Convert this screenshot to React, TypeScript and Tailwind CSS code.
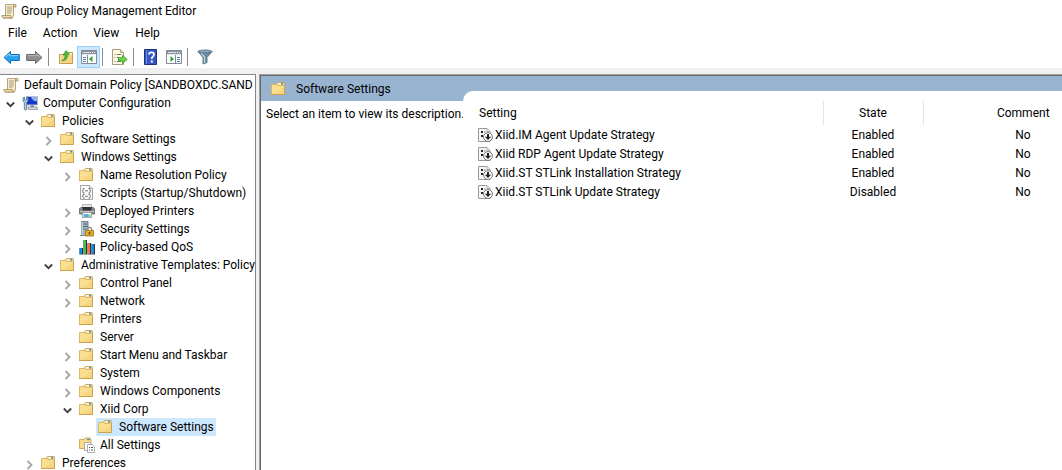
import { useState, type ReactNode } from 'react';

type IconProps = { className?: string };

function ScrollIcon() {
  return (
    <svg width="16" height="16" viewBox="0 0 16 16" aria-hidden="true">
      <path d="M4.5 1.5h8v10.500l-1 3h-9c2 0 2-1 2-2.500z" fill="#f8edc8" stroke="#b5a47c" />
      <path d="M12.500 4V2.500a1.200 1.200 0 0 1 2.500 0V4z" fill="#dcc48c" stroke="#a08c60" strokeWidth=".8" />
      <path d="M.8 12.500h8.700c0 1.300.5 2.500 1.700 2.500H2.500C1.400 15 .8 14 .8 12.500z" fill="#e9d7a5" stroke="#a08c60" strokeWidth=".8" />
      <path d="M6 4h5M6 6h5M6 8h5M6 10h4" stroke="#9c9484" strokeWidth=".9" />
    </svg>
  );
}

function FolderIcon({ className }: IconProps) {
  return (
    <svg width="16" height="16" viewBox="0 0 16 16" className={className} aria-hidden="true">
      <path d="M5.500 4V2.500l1-1H13l.5 1V5h-8z" fill="#f3d78e" stroke="#c9a04c" strokeWidth=".9" />
      <path d="M7.500 2.800H10" stroke="#fff" strokeWidth="1.400" />
      <path d="M10 2.800h2" stroke="#3a96dc" strokeWidth="1.400" />
      <path d="M.5 3.500h5l1.500 1h6.500v9H.5z" fill="#fadf91" stroke="#dcb866" />
      <path d="M3 13 13 6v7z" fill="#f4d07a" opacity=".7" />
      <path d="M0 13.500h13.500V5" fill="none" stroke="#c8a04c" strokeWidth=".9" />
    </svg>
  );
}

function ComputerIcon() {
  return (
    <svg width="16" height="16" viewBox="0 0 16 16" aria-hidden="true">
      <path d="M4.500 1.500h11v8.500h-11z" fill="#1638c8" stroke="#b8c0cc" />
      <path d="M9 2h6v4c-2 1-4 0-6-4z" fill="#8fb4f4" />
      <path d="M8.500 10.500h3.500v2H8.500z" fill="#6c7688" />
      <path d="M6 12h9l.8 2.500H6.500z" fill="#d6d8de" stroke="#7c8490" strokeWidth=".7" />
      <path d="M1 3v3l1.300 1.200V14c0 1.300 2.400 1.300 2.400 0V7.200L6 6V3L4.600 2v3H2.400V2z" fill="#b4cfe4" stroke="#426c90" strokeWidth=".8" />
    </svg>
  );
}

function ScriptIcon() {
  return (
    <svg width="16" height="16" viewBox="0 0 16 16" aria-hidden="true">
      <path d="M1.500.5h9l3 3v11h-12z" fill="#fafafa" stroke="#a4a4a4" />
      <path d="M10.500.5v3h3" fill="#e2e2e2" stroke="#a4a4a4" strokeWidth=".8" />
      <path d="M5.500 3.500H4.200v1.500L3.200 6l1 .8v1.200h1.300M9.500 3.500h1.300v1.500l1 1-1 .8v1.200H9.500M5.500 9.500H4.200v1l-1 .8 1 .8v1h1.300M9.500 9.500h1.300v1l1 .8-1 .8v1H9.500" fill="none" stroke="#666" strokeWidth=".9" />
      <path d="M6 5.800h3M6 11.300h3" stroke="#777" />
    </svg>
  );
}

function PrinterIcon() {
  return (
    <svg width="16" height="16" viewBox="0 0 16 16" aria-hidden="true">
      <path d="M3.500 1.500h9V6h-9z" fill="#e6e6e6" stroke="#a8a8a8" strokeWidth=".8" />
      <path d="M.5 5.500 2 4.500h12l1.500 1V11H.5z" fill="#85888c" stroke="#64686c" strokeWidth=".8" />
      <path d="M3.500 4h9v3.500h-9z" fill="#333437" />
      <path d="M1 8.500h14" stroke="#c2c4c6" />
      <path d="M4 9.500h8l1 5H3z" fill="#fff" stroke="#999" strokeWidth=".8" />
      <path d="M4.500 11h5v3h-5z" fill="#56b2e0" />
      <path d="M9 11.500h2.500l.5 2.500H9z" fill="#89c9a0" />
    </svg>
  );
}

function SecurityIcon() {
  return (
    <svg width="16" height="16" viewBox="0 0 16 16" aria-hidden="true">
      <path d="M2.500.5h6.500v14H2.500z" fill="#a9bac6" stroke="#6c808c" />
      <path d="M3 1v13" stroke="#d5e0e6" />
      <path d="M4 3h4.500M4 5.500h4.500M4 8h3" stroke="#3f5666" strokeWidth=".9" />
      <path d="M1 14.500h6" stroke="#7c8c96" />
      <path d="M8.300 10V8.500a2.200 2.200 0 0 1 4.400 0V10" fill="none" stroke="#92898a" strokeWidth="1.300" />
      <path d="M6.500 9.500h8v5.500h-8z" fill="#e0ad30" stroke="#9d7110" strokeWidth=".8" />
      <path d="M10.500 11v2.500" stroke="#694907" strokeWidth="1.500" />
    </svg>
  );
}

function ChartIcon() {
  return (
    <svg width="17" height="16" viewBox="0 0 17 16" aria-hidden="true">
      <path d="M.5 9h3.500v6.500H.5zM4.500 1H8v14.500H4.500zM8.500 4H12v11.500H8.500zM12.500 5H16v10.500h-3.500z" fill="#27343c" />
      <path d="M.5 9H3v6H.5z" fill="#1488dc" />
      <path d="M4.500 1H7v14H4.500z" fill="#4bb950" />
      <path d="M8.500 4H11v11H8.500z" fill="#ee7350" />
      <path d="M12.500 5H15v10h-2.500z" fill="#1c86d0" />
    </svg>
  );
}

function AllSettingsIcon() {
  return (
    <svg width="17" height="16" viewBox="0 0 17 16" aria-hidden="true">
      <path d="M.5 2.500h4.500l1-1.500h5l1 1.500v9H.5z" fill="#f9dc88" stroke="#d0a653" strokeWidth=".9" />
      <path d="M8 2.500h3" stroke="#3a96dc" strokeWidth="1.200" />
      <path d="M5.500 5.500h5l2 2v6h-7z" fill="#fff" stroke="#999" strokeWidth=".8" />
      <path d="M8.500 7.500h5l2 2v6h-7z" fill="#fff" stroke="#999" strokeWidth=".8" />
      <path d="M10 10.500h1M12 10.500h2M10 13h1M12 13h2" stroke="#555" />
    </svg>
  );
}

function PolicyIcon() {
  return (
    <svg width="15" height="16" viewBox="0 0 15 16" className="shrink-0" aria-hidden="true">
      <path d="M.5 1.500h8.500l3 3v10H.5z" fill="#f6f6f6" stroke="#999" />
      <path d="M9 1.500v3h3" fill="#ddd" stroke="#aaa" strokeWidth=".8" />
      <path d="M3 4h2v2H3zM3 8h2v2H3z" fill="#222" />
      <path d="M6 5h1.500M6 9h1" stroke="#777" />
      <circle cx="10" cy="10" r="4.400" fill="#fff" stroke="#707070" />
      <path d="M9 7h2v2.700h2.200L10 13 6.800 9.700H9z" fill="#222" />
    </svg>
  );
}

function ArrowIcon({ forward }: { forward?: boolean }) {
  return (
    <svg width="17" height="16" viewBox="0 0 17 16" aria-hidden="true">
      {forward ? (
        <>
          <path d="M16 8.500 9.500 2.500V5.500H.7v6h8.800V14.500z" fill="#8e8e8e" stroke="#696969" />
          <path d="M1.700 6.700h9V5l3.700 3.200" fill="none" stroke="#bcbcbc" />
        </>
      ) : (
        <>
          <path d="M1 8.500 7.500 2.500V5.500h8.800v6H7.500V14.500z" fill="#27a2ec" stroke="#1370b8" />
          <path d="M2.500 8.200 6.500 4.700v2h8.800" fill="none" stroke="#8ad5fa" />
        </>
      )}
    </svg>
  );
}

function UpFolderIcon() {
  return (
    <svg width="16" height="16" viewBox="0 0 16 16" aria-hidden="true">
      <path d="M1.500 5.500H7l1.500-2H14.500v11h-13z" fill="#f4d584" stroke="#c49c4c" />
      <path d="M9.500 4.500h4" stroke="#fff" />
      <path d="M2.500 13.500v-7h5l1-1h5" fill="none" stroke="#fdeab0" />
      <path d="M3.500 11.500c3-.5 3.700-3 3.700-5.500L5 6.200 8 1.500 11.500 5.300 9.400 5.700c.3 4-2.300 6.500-5.900 5.800z" fill="#4ebd35" stroke="#35912a" strokeWidth=".7" />
    </svg>
  );
}

function PaneIcon({ right }: { right?: boolean }) {
  return (
    <svg width="16" height="14" viewBox="0 0 16 14" aria-hidden="true">
      <path d="M.5.500h15v13H.5z" fill="#fff" stroke="#848b94" />
      <path d="M1 1h14v3H1z" fill="#8c959f" />
      <path d="M2 2.500h8" stroke="#dce1e6" />
      <path d="M11 2.500h1M13 2.500h1" stroke="#fff" />
      <path d="M1 4.500h14" stroke="#e2e6ea" />
      {right ? (
        <>
          <path d="M9.500 5v8" stroke="#848b94" />
          <path d="M11 7.500h3M11 9.500h3M11 11.500h3" stroke="#5080b4" />
          <path d="M4.500 6 8 9l-3.500 3z" fill="#2ca52c" />
        </>
      ) : (
        <>
          <path d="M6.500 5v8" stroke="#848b94" />
          <path d="M2 7.500h3M2 9.500h3M2 11.500h3" stroke="#5080b4" />
          <path d="M11.500 6 8 9l3.500 3z" fill="#2ca52c" />
        </>
      )}
    </svg>
  );
}

function ExportIcon() {
  return (
    <svg width="17" height="16" viewBox="0 0 17 16" aria-hidden="true">
      <path d="M1.500.500h8l3 3v12h-11z" fill="#fffbe4" stroke="#a79a78" />
      <path d="M9.500.500v3h3" fill="#e9dfba" stroke="#a79a78" strokeWidth=".8" />
      <path d="M3.500 5.500h1M6 5.500h4M3.500 8.500h1M6 8.500h2M3.500 12.500h1M6 12.500h4" stroke="#767064" />
      <path d="M7.500 8.800h4V6.300L16.200 10.500 11.500 14.500V12h-4z" fill="#6bd34c" stroke="#34992a" strokeWidth=".8" />
    </svg>
  );
}

function HelpIcon() {
  return (
    <svg width="14" height="16" viewBox="0 0 14 16" aria-hidden="true">
      <path d="M.5.500h12v15H.5z" fill="#3558c4" stroke="#1c347d" />
      <path d="M2.500 1v14" stroke="#6f8ade" />
      <path d="M5 5.500C5 2.700 10 2.700 10 5.500c0 2-2.300 2-2.300 4.500" fill="none" stroke="#fff" strokeWidth="1.700" />
      <path d="M6.800 11.500h2v2h-2z" fill="#fff" />
    </svg>
  );
}

function FilterIcon() {
  return (
    <svg width="16" height="16" viewBox="0 0 16 16" aria-hidden="true">
      <path d="M1 2.500 6 8.500V15l4-1.500v-5l5-6z" fill="#6e8da4" stroke="#56707f" strokeWidth=".9" />
      <path d="M7.500 14V8L4 4" fill="none" stroke="#c3d6e2" strokeWidth="1.200" />
      <ellipse cx="8" cy="2.500" rx="7" ry="1.500" fill="#8fabbd" stroke="#49647a" strokeWidth=".8" />
    </svg>
  );
}

function Chevron({ open }: { open: boolean }) {
  return (
    <svg width="10" height="10" viewBox="0 0 10 10" aria-hidden="true">
      {open ? (
        <path d="M.8 2.500 4.500 6.200 8.200 2.500" fill="none" stroke="#404040" strokeWidth="1.800" />
      ) : (
        <path d="M2.500 1l4 4-4 4" fill="none" stroke="#a6a6a6" strokeWidth="1.800" />
      )}
    </svg>
  );
}

type Node = {
  label: string;
  icon?: ReactNode;
  open?: boolean;
  leaf?: boolean;
  children?: Node[];
};

const tree: Node[] = [
  {
    label: 'Computer Configuration',
    icon: <ComputerIcon />,
    open: true,
    children: [
      {
        label: 'Policies',
        open: true,
        children: [
          { label: 'Software Settings' },
          {
            label: 'Windows Settings',
            open: true,
            children: [
              { label: 'Name Resolution Policy' },
              { label: 'Scripts (Startup/Shutdown)', icon: <ScriptIcon />, leaf: true },
              { label: 'Deployed Printers', icon: <PrinterIcon /> },
              { label: 'Security Settings', icon: <SecurityIcon /> },
              { label: 'Policy-based QoS', icon: <ChartIcon /> },
            ],
          },
          {
            label: 'Administrative Templates: Policy',
            open: true,
            children: [
              { label: 'Control Panel' },
              { label: 'Network' },
              { label: 'Printers', leaf: true },
              { label: 'Server', leaf: true },
              { label: 'Start Menu and Taskbar' },
              { label: 'System' },
              { label: 'Windows Components' },
              {
                label: 'Xiid Corp',
                open: true,
                children: [{ label: 'Software Settings', leaf: true }],
              },
              { label: 'All Settings', icon: <AllSettingsIcon />, leaf: true },
            ],
          },
        ],
      },
      { label: 'Preferences' },
    ],
  },
];

const SELECTED = 'Xiid Corp/Software Settings';

function TreeItem({ node, parent, selected, onSelect }: { node: Node; parent: string; selected: string; onSelect: (id: string) => void }) {
  const [open, setOpen] = useState(Boolean(node.open));
  const id = `${parent}/${node.label}`;
  return (
    <li>
      <div className="flex h-[18px] items-center">
        {node.leaf ? (
          <span className="w-[17px] shrink-0" />
        ) : (
          <button
            type="button"
            aria-label={`Toggle ${node.label}`}
            aria-expanded={open}
            onClick={() => setOpen(!open)}
            className="flex h-full w-[17px] shrink-0 items-center pt-[3px] pl-[3px]"
          >
            <Chevron open={open} />
          </button>
        )}
        <button
          type="button"
          onClick={() => onSelect(id)}
          className={`flex h-full shrink-0 items-center px-[2px] whitespace-nowrap ${id === selected ? 'bg-[#cce8ff]' : ''}`}
        >
          <span className="w-[21px]">{node.icon ?? <FolderIcon />}</span>
          {node.label}
        </button>
      </div>
      {open && node.children && (
        <ul className="pl-[19px]">
          {node.children.map((child) => (
            <TreeItem key={child.label} node={child} parent={node.label} selected={selected} onSelect={onSelect} />
          ))}
        </ul>
      )}
    </li>
  );
}

const settings = [
  { name: 'Xiid.IM Agent Update Strategy', state: 'Enabled', comment: 'No' },
  { name: 'Xiid RDP Agent Update Strategy', state: 'Enabled', comment: 'No' },
  { name: 'Xiid.ST STLink Installation Strategy', state: 'Enabled', comment: 'No' },
  { name: 'Xiid.ST STLink Update Strategy', state: 'Disabled', comment: 'No' },
];

function ToolButton({ label, active, children }: { label: string; active?: boolean; children: ReactNode }) {
  return (
    <button
      type="button"
      aria-label={label}
      className={`flex h-[22px] w-[23px] items-center justify-center border ${active ? 'border-[#99d1ff] bg-[#cce8ff]' : 'border-transparent'}`}
    >
      {children}
    </button>
  );
}

function Separator() {
  return <span className="mr-[5px] ml-[2px] h-[18px] w-px bg-[#8c8c8c]" />;
}

export default function App() {
  const [selected, setSelected] = useState(SELECTED);
  return (
    <div className="flex h-screen flex-col overflow-hidden bg-white font-[Roboto,sans-serif] text-[12px] leading-[18px] text-black">
      <header className="flex h-[22px] shrink-0 items-center gap-1 pl-px">
        <ScrollIcon />
        <h1>Group Policy Management Editor</h1>
      </header>
      <nav className="flex h-[22px] shrink-0 items-center gap-4 pl-2">
        <button type="button">File</button>
        <button type="button">Action</button>
        <button type="button">View</button>
        <button type="button">Help</button>
      </nav>
      <div className="flex h-6 shrink-0 items-center pt-px" role="toolbar" aria-label="Standard">
        <ToolButton label="Back"><ArrowIcon /></ToolButton>
        <ToolButton label="Forward"><ArrowIcon forward /></ToolButton>
        <Separator />
        <ToolButton label="Up one level"><UpFolderIcon /></ToolButton>
        <ToolButton label="Show console tree" active><PaneIcon /></ToolButton>
        <Separator />
        <ToolButton label="Export list"><ExportIcon /></ToolButton>
        <Separator />
        <ToolButton label="Help"><HelpIcon /></ToolButton>
        <ToolButton label="Show action pane"><PaneIcon right /></ToolButton>
        <Separator />
        <ToolButton label="Filter"><FilterIcon /></ToolButton>
      </div>
      <main className="flex min-h-0 grow bg-[#f0f0f0] pt-[6px]">
        <aside className="w-64 shrink-0 overflow-hidden border-t border-r border-[#828790] bg-white pt-px">
          <div className="overflow-hidden pl-[3px]">
            <button type="button" className="flex h-[18px] items-center whitespace-nowrap">
              <span className="w-[21px] shrink-0"><ScrollIcon /></span>
              Default Domain Policy [SANDBOXDC.SAND
            </button>
            <ul>
              {tree.map((node) => (
                <TreeItem key={node.label} node={node} parent="" selected={selected} onSelect={setSelected} />
              ))}
            </ul>
          </div>
        </aside>
        <div className="ml-[3px] flex min-w-0 grow border-t border-l border-[#a0a0a0]">
          <div className="flex min-w-0 grow border-t border-l border-[#696969]">
            <section className="flex w-[202px] shrink-0 flex-col bg-white">
              <h2 className="flex h-[25px] shrink-0 items-center bg-[#99b4d1] pl-[10px]">
                <FolderIcon className="mr-[9px]" />
                Software Settings
              </h2>
              <p className="pt-1 pl-[5px] whitespace-nowrap">Select an item to view its description.</p>
            </section>
            <section className="flex min-w-0 grow flex-col bg-[#99b4d1] pt-[15px]">
              <div className="grow overflow-hidden rounded-tl-[10px] bg-white pt-[10px]">
                <table className="w-full min-w-[660px] table-fixed border-collapse">
                  <thead>
                    <tr className="h-6">
                      <th className="p-0 pl-4 text-left font-normal">Setting</th>
                      <th className="w-[100px] border-x border-[#e5e5e5] p-0 text-center font-normal">State</th>
                      <th className="w-[200px] p-0 text-center font-normal">Comment</th>
                    </tr>
                  </thead>
                  <tbody>
                    {settings.map((row) => (
                      <tr key={row.name} className="h-[19px]">
                        <td className="p-0 pl-[15px]">
                          <a href="#setting" className="flex items-center gap-[2px]">
                            <PolicyIcon />
                            {row.name}
                          </a>
                        </td>
                        <td className="p-0 text-center">{row.state}</td>
                        <td className="p-0 text-center">{row.comment}</td>
                      </tr>
                    ))}
                  </tbody>
                </table>
              </div>
            </section>
          </div>
        </div>
      </main>
    </div>
  );
}
